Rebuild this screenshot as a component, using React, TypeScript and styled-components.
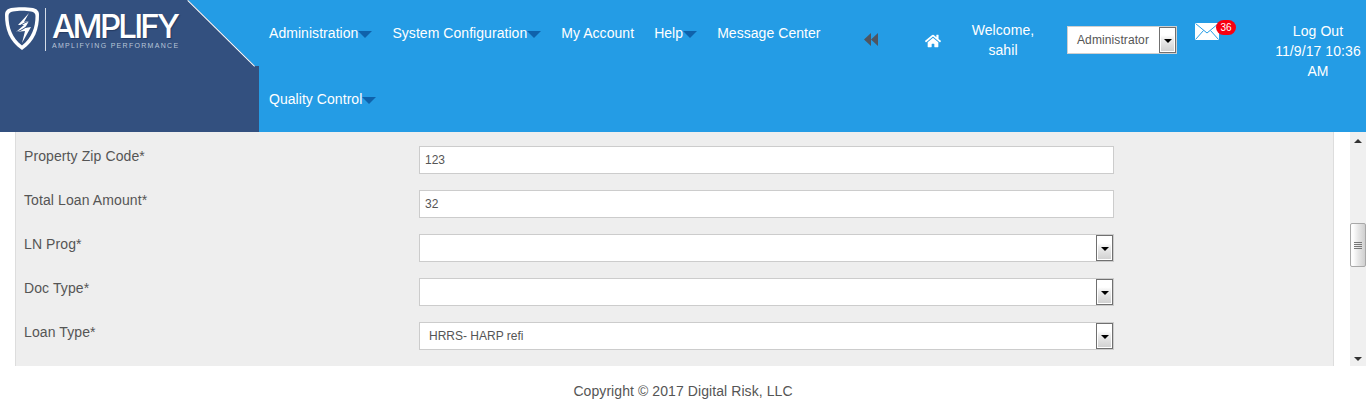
import React from 'react';
import styled, { createGlobalStyle } from 'styled-components';
import { FaHome } from 'react-icons/fa';

const GlobalStyle = createGlobalStyle`
  html, body {
    margin: 0;
    padding: 0;
    height: 100%;
    background: #ffffff;
    overflow: hidden;
    font-family: 'Liberation Sans', Arial, sans-serif;
  }
`;

const Page = styled.div`
  display: flex;
  flex-direction: column;
  width: 1366px;
  height: 409px;
`;

/* Шапка */
const Header = styled.header`
  display: flex;
  flex: none;
  height: 132px;
  background: #249ce5;
`;

const LogoPanel = styled.div`
  position: relative;
  flex: none;
  display: flex;
  align-items: flex-start;
  box-sizing: border-box;
  width: 259px;
  height: 132px;
  padding: 7px 0 0 5px;
  background: #33507f;
  clip-path: polygon(0 0, 188px 0, 255px 66px, 259px 66px, 259px 100%, 0 100%);
`;

const Diagonal = styled.svg`
  position: absolute;
  top: 0;
  left: 186px;
`;

const LogoRule = styled.div`
  width: 1px;
  height: 43px;
  margin: 1px 6px 0 6px;
  background: #d5dde8;
`;

const LogoWords = styled.div`
  display: flex;
  flex-direction: column;
`;

const LogoTitle = styled.span`
  margin-top: 6px;
  color: #ffffff;
  font-family: Inter, 'Liberation Sans', sans-serif;
  font-size: 33px;
  font-weight: 500;
  line-height: 26px;
  letter-spacing: -2.8px;
  text-shadow: 1px 1px 1px rgba(20, 35, 70, 0.5);
`;

const LogoTagline = styled.span`
  margin-top: 3px;
  color: #b8c5d8;
  font-family: 'Liberation Sans', Arial, sans-serif;
  font-size: 7px;
  line-height: 8px;
  letter-spacing: 1.3px;
  white-space: nowrap;
`;

const Nav = styled.nav`
  flex: none;
  display: flex;
  flex-wrap: wrap;
  align-content: flex-start;
  width: 590px;
`;

const NavItem = styled.a`
  display: flex;
  align-items: center;
  height: 66px;
  padding: 0 10px;
  color: #ffffff;
  font-size: 14px;
  letter-spacing: 0.05px;
`;

const Caret = styled.span`
  width: 0;
  height: 0;
  margin-top: 2px;
  border-top: 7px solid #0f62ab;
  border-left: 7px solid transparent;
  border-right: 7px solid transparent;
`;

const RewindCell = styled.div`
  flex: none;
  display: flex;
  justify-content: center;
  width: 44px;
  padding-top: 33px;
`;

const HomeCell = styled.div`
  flex: none;
  display: flex;
  width: 36px;
  margin-left: 32px;
  padding-top: 33px;
  color: #ffffff;
  font-size: 16px;
`;

const Welcome = styled.div`
  flex: none;
  width: 72px;
  margin-left: 6px;
  padding-top: 20px;
  color: #ffffff;
  font-size: 14px;
  line-height: 20px;
  letter-spacing: 0.08px;
  text-align: center;
`;

const RoleBox = styled.div`
  flex: none;
  display: flex;
  justify-content: space-between;
  box-sizing: border-box;
  width: 110px;
  height: 28px;
  margin: 26px 0 0 28px;
  padding-left: 9px;
  background: #ffffff;
  border: 1px solid #cfcfcf;
  color: #555555;
  font-size: 12px;
  line-height: 27px;
  letter-spacing: 0.1px;
`;

const DropButton = styled.span`
  flex: none;
  display: flex;
  justify-content: center;
  box-sizing: border-box;
  width: 17px;
  height: 26px;
  padding-top: 11px;
  background: linear-gradient(#ffffff 0 30%, #eeeeee 45%, #cfcfcf 100%);
  border: 1px solid #707070;
  box-shadow: inset 0 0 0 1px #ffffff;
`;

const DropArrow = styled.span`
  width: 0;
  height: 0;
  border-top: 4px solid #000000;
  border-left: 4px solid transparent;
  border-right: 4px solid transparent;
`;

const MailCell = styled.div`
  position: relative;
  flex: none;
  width: 42px;
  height: 20px;
  margin: 23px 0 0 18px;
`;

const MailBadge = styled.span`
  position: absolute;
  top: -3px;
  left: 21px;
  width: 20px;
  height: 15px;
  border-radius: 8px;
  background: #f80010;
  color: #ffffff;
  font-size: 10px;
  line-height: 15px;
  text-align: center;
`;

const Session = styled.div`
  flex: none;
  width: 92px;
  margin-left: 35px;
  padding-top: 21px;
  color: #ffffff;
  font-size: 14px;
  line-height: 20px;
  letter-spacing: 0.08px;
  text-align: center;
`;

/* Основная часть */
const Body = styled.main`
  flex: none;
  display: flex;
  height: 234px;
  padding-left: 15px;
`;

const FormPanel = styled.section`
  box-sizing: border-box;
  flex: none;
  display: flex;
  flex-direction: column;
  gap: 16px;
  width: 1319px;
  padding: 14px 0 0 8px;
  background: #eeeeee;
  border-left: 1px solid #dddddd;
  border-right: 1px solid #dddddd;
`;

const Row = styled.div`
  display: flex;
  height: 28px;
`;

const Label = styled.label`
  flex: none;
  width: 395px;
  color: #555555;
  font-size: 14px;
  line-height: 20px;
  letter-spacing: 0.1px;
`;

const TextField = styled.div`
  box-sizing: border-box;
  width: 695px;
  height: 28px;
  padding-left: 5px;
  background: #ffffff;
  border: 1px solid #cccccc;
  color: #555555;
  font-size: 12px;
  line-height: 27px;
`;

const SelectField = styled(TextField)`
  display: flex;
  justify-content: space-between;
  padding-left: 9px;
`;

const ScrollBar = styled.div`
  box-sizing: border-box;
  flex: none;
  display: flex;
  flex-direction: column;
  align-items: center;
  width: 16px;
  margin-left: 16px;
  padding: 7px 0 5px;
  background: #f0f0f0;
`;

const ScrollUp = styled.span`
  width: 0;
  height: 0;
  border-bottom: 4px solid #333333;
  border-left: 4px solid transparent;
  border-right: 4px solid transparent;
`;

const ScrollDown = styled.span`
  width: 0;
  height: 0;
  margin-top: auto;
  border-top: 4px solid #333333;
  border-left: 4px solid transparent;
  border-right: 4px solid transparent;
`;

const ScrollThumb = styled.div`
  box-sizing: border-box;
  display: flex;
  flex-direction: column;
  align-items: center;
  justify-content: center;
  gap: 1px;
  width: 16px;
  height: 44px;
  margin-top: 80px;
  background: linear-gradient(90deg, #fdfdfd 0 15%, #e8e8e8 50%, #cfcfcf 100%);
  border: 1px solid #a8a8a8;
  border-radius: 2px;
`;

const ThumbGrip = styled.span`
  width: 8px;
  height: 1px;
  background: #777777;
`;

const Footer = styled.footer`
  flex: none;
  height: 43px;
  color: #555555;
  font-size: 14px;
  line-height: 50px;
  letter-spacing: 0.08px;
  text-align: center;
`;

const ShieldLogo = () => (
  <svg width="34" height="43" viewBox="0 0 34 43">
    <path
      d="M6 1C12 0 22 0 28 1 32 2 34 4 34 8 34 22 30 34 17 43 4 34 0 22 0 8 0 4 2 2 6 1z"
      fill="#ffffff"
    />
    <path
      d="M8 4.5C13 3.5 21 3.5 26 4.5 29 5 30.5 6.5 30.5 9 30.5 20 27 31 17 38.5 7 31 3.5 20 3.5 9 3.5 6.5 5 5 8 4.5z"
      fill="#33507f"
    />
    <path d="M24 6L13 18 19 18 11 25 20 24 17 36 26 20 20 21 24 14 19 15z" fill="#ffffff" />
    <ellipse cx="17" cy="20" rx="9" ry="2.2" transform="rotate(-32 17 20)" fill="none" stroke="#33507f" strokeWidth="0.9" />
  </svg>
);

const RewindIcon = () => (
  <svg width="14" height="13" viewBox="0 0 14 13">
    <path d="M7 0V13L0 6.5zM14 0V13L7 6.5z" fill="#4f5560" />
  </svg>
);

const MailIcon = () => (
  <svg width="24" height="17" viewBox="0 0 24 17">
    <rect width="24" height="17" fill="#ffffff" />
    <path d="M0.5 0.5L12 10 23.5 0.5M0.5 16.5L8.5 7.5M23.5 16.5L15.5 7.5" fill="none" stroke="#249ce5" />
  </svg>
);

const ComboButton = () => (
  <DropButton>
    <DropArrow />
  </DropButton>
);

export default function App() {
  return (
    <Page>
      <GlobalStyle />
      <Header>
        <LogoPanel>
          <ShieldLogo />
          <LogoRule />
          <LogoWords>
            <LogoTitle>AMPLIFY</LogoTitle>
            <LogoTagline>AMPLIFYING PERFORMANCE</LogoTagline>
          </LogoWords>
          <Diagonal width="73" height="68" viewBox="0 0 73 68">
            <path d="M2 0L69 66" stroke="#ffffff" strokeWidth="2" fill="none" />
          </Diagonal>
        </LogoPanel>
        <Nav>
          <NavItem>Administration<Caret /></NavItem>
          <NavItem>System Configuration<Caret /></NavItem>
          <NavItem>My Account</NavItem>
          <NavItem>Help<Caret /></NavItem>
          <NavItem>Message Center</NavItem>
          <NavItem>Quality Control<Caret /></NavItem>
        </Nav>
        <RewindCell><RewindIcon /></RewindCell>
        <HomeCell><FaHome /></HomeCell>
        <Welcome>Welcome,<br />sahil</Welcome>
        <RoleBox>Administrator<ComboButton /></RoleBox>
        <MailCell>
          <MailIcon />
          <MailBadge>36</MailBadge>
        </MailCell>
        <Session>Log Out<br />11/9/17 10:36 AM</Session>
      </Header>
      <Body>
        <FormPanel>
          <Row>
            <Label>Property Zip Code*</Label>
            <TextField>123</TextField>
          </Row>
          <Row>
            <Label>Total Loan Amount*</Label>
            <TextField>32</TextField>
          </Row>
          <Row>
            <Label>LN Prog*</Label>
            <SelectField><span /><ComboButton /></SelectField>
          </Row>
          <Row>
            <Label>Doc Type*</Label>
            <SelectField><span /><ComboButton /></SelectField>
          </Row>
          <Row>
            <Label>Loan Type*</Label>
            <SelectField>HRRS- HARP refi<ComboButton /></SelectField>
          </Row>
        </FormPanel>
        <ScrollBar>
          <ScrollUp />
          <ScrollThumb>
            <ThumbGrip /><ThumbGrip /><ThumbGrip /><ThumbGrip />
          </ScrollThumb>
          <ScrollDown />
        </ScrollBar>
      </Body>
      <Footer>Copyright © 2017 Digital Risk, LLC</Footer>
    </Page>
  );
}
